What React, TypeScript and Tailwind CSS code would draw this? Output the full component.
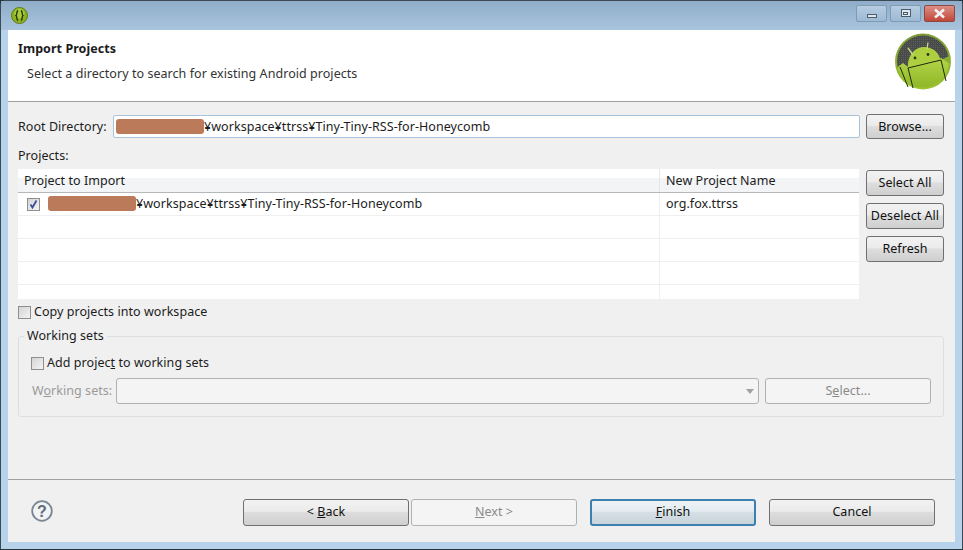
const FONT = "font-['Noto_Sans','Liberation_Sans',sans-serif]"

function Redacted() {
    return <span className="inline-block h-[15px] w-[88px] rounded-[3px] bg-[#bb7b5b] align-[-3px] blur-[0.5px]" />
}

function WinButton({ className = '', focused = false, disabled = false, children }: { className?: string; focused?: boolean; disabled?: boolean; children: React.ReactNode }) {
    let look = 'border-[#707070] bg-[linear-gradient(#f2f2f2_0%,#ebebeb_45%,#dddddd_50%,#cfcfcf_100%)] text-[#111]'
    if (focused) look = 'border-[#3c7fb1] border-2 bg-[linear-gradient(#eef3f6_0%,#e3ebf0_45%,#d5dfe5_50%,#c8d3da_100%)] text-[#111]'
    if (disabled) look = 'border-[#adb2b5] bg-[#f4f4f4] text-[#8a8a8a]'
    return (
        <div className={`flex items-center justify-center rounded-[3px] border ${look} ${className}`}>
            {children}
        </div>
    )
}

function CheckBox({ checked = false }: { checked?: boolean }) {
    return (
        <div className="flex h-[13px] w-[13px] shrink-0 items-center justify-center border border-[#8e8f8f] bg-[linear-gradient(135deg,#d4d4d4,#f4f4f4)]">
            {checked && (
                <svg width="11" height="11" viewBox="0 0 11 11">
                    <path d="M2.5 5.5 L4.5 8.5 L8.5 1.5" fill="none" stroke="#3a4f9c" strokeWidth="1.8" />
                </svg>
            )}
        </div>
    )
}

function TitleIcon() {
    return (
        <svg width="17" height="17" viewBox="0 0 17 17" className="ml-[1px]">
            <circle cx="8.5" cy="8.5" r="8" fill="#8db11f" stroke="#5d7a1a" />
            <circle cx="8.5" cy="6.5" r="5" fill="#a9cc3a" />
            <path d="M7 3.5 C5 4.5 6.5 7.5 5 8.5 C6.5 9.5 5 12.5 7 13.5 M10 3.5 C12 4.5 10.5 7.5 12 8.5 C10.5 9.5 12 12.5 10 13.5" fill="none" stroke="#26350a" strokeWidth="1.4" />
        </svg>
    )
}

function AndroidLogo() {
    return (
        <svg width="56" height="57" viewBox="0 0 56 57">
            <defs>
                <linearGradient id="rim" x1="0" y1="0" x2="0" y2="1">
                    <stop offset="0" stopColor="#7f9c35" />
                    <stop offset="1" stopColor="#9cc52f" />
                </linearGradient>
                <linearGradient id="bot" x1="0" y1="0" x2="0" y2="1">
                    <stop offset="0" stopColor="#b4d44a" />
                    <stop offset="1" stopColor="#8cb524" />
                </linearGradient>
                <pattern id="grille" width="2" height="2" patternUnits="userSpaceOnUse">
                    <rect width="2" height="2" fill="#474a47" />
                    <rect width="1" height="1" fill="#5e615d" />
                </pattern>
                <clipPath id="disc">
                    <circle cx="28" cy="28.5" r="26" />
                </clipPath>
            </defs>
            <circle cx="28" cy="28.5" r="28" fill="url(#rim)" />
            <g clipPath="url(#disc)">
                <path d="M0 34 L0 0 L56 0 L56 22 L46 27 L13 35 Z" fill="url(#grille)" />
                <path d="M0 36 L8 30 L13 34 L46 25 L56 32 L56 57 L0 57 Z" fill="url(#bot)" />
            </g>
            <path d="M13 34.5 C12 24 19 14 29 14 C37 14 44 19 45.5 27.5 Z" fill="#aed040" />
            <path d="M13 15 L18 22 M33 9.5 L32 16" stroke="#c4d98a" strokeWidth="1.3" />
            <circle cx="20" cy="25" r="1.4" fill="#2b3510" />
            <circle cx="33" cy="21.5" r="1.4" fill="#2b3510" />
            <path d="M13 35 L46 27 M13 35 L18 55 M46 27 L51 48 M5 34 L13 54" fill="none" stroke="#1f2a0c" strokeWidth="1" />
        </svg>
    )
}

function HelpIcon() {
    return (
        <svg width="22" height="22" viewBox="0 0 22 22" className="-mt-[2px]">
            <circle cx="11" cy="11" r="9.8" fill="#f1f3f5" stroke="#7a8794" strokeWidth="1.8" />
            <text x="11" y="16.5" textAnchor="middle" fontSize="16" fontWeight="700" fill="#5f6c79" fontFamily="Liberation Sans, sans-serif">?</text>
        </svg>
    )
}

export default function App() {
    return (
        <div className={`h-[550px] w-[963px] overflow-hidden bg-[#26343b] text-[12.5px] leading-[16px] tracking-[0.05px] text-[#1c1c1c] ${FONT}`}>
            <div className="flex h-[549px] flex-col rounded-t-[6px] border-x border-t border-[#3b4a55] bg-[#b7d3ec]">
                <div className="flex h-[29px] shrink-0 items-center justify-between bg-[linear-gradient(#8fadc9,#a9c4dd)] pr-[7px] pl-[9px]">
                    <TitleIcon />
                    <div className="-mt-[5px] flex gap-[3px]">
                        <div className="flex h-[17px] w-[31px] items-end justify-center rounded-[2px] border border-[#7f9ab4] bg-[linear-gradient(#b6cde2,#9db9d3)] pb-[3px]">
                            <div className="h-[4px] w-[10px] border border-[#4c5c6b] bg-[#dfe7ee]" />
                        </div>
                        <div className="flex h-[17px] w-[31px] items-center justify-center rounded-[2px] border border-[#7f9ab4] bg-[linear-gradient(#b6cde2,#9db9d3)]">
                            <div className="flex h-[8px] w-[10px] items-center justify-center border border-[#4c5c6b] bg-[#dfe7ee]">
                                <div className="h-[3px] w-[5px] border border-[#4c5c6b]" />
                            </div>
                        </div>
                        <div className="flex h-[17px] w-[31px] items-center justify-center rounded-[2px] border border-[#8d4a42] bg-[linear-gradient(#dc8f85,#c2463a)]">
                            <svg width="13" height="11" viewBox="0 0 13 11">
                                <path d="M2 1.5 L11 9.5 M11 1.5 L2 9.5" stroke="#f2f2f2" strokeWidth="2.6" />
                            </svg>
                        </div>
                    </div>
                </div>

                <div className="mx-[7px] mb-[7px] flex flex-1 flex-col bg-[#f0f0f0]">
                    <div className="flex h-[72px] shrink-0 justify-between border-b border-[#a0a0a0] bg-white pr-[4px]">
                        <div className="pl-[10px]">
                            <div className="mt-[11px] font-bold">Import Projects</div>
                            <div className="mt-[9px] pl-[9px] text-[#333]">Select a directory to search for existing Android projects</div>
                        </div>
                        <div className="mt-[3px]">
                            <AndroidLogo />
                        </div>
                    </div>

                    <div className="flex-1 px-[10px]">
                        <div className="mt-[12px] flex items-center">
                            <div className="w-[95px]">Root Directory:</div>
                            <div className="flex h-[23px] w-[747px] items-center rounded-[2px] border border-[#a8c4dc] bg-white pl-[2px] whitespace-nowrap">
                                <Redacted />
                                <span>¥workspace¥ttrss¥Tiny-Tiny-RSS-for-Honeycomb</span>
                            </div>
                            <WinButton className="ml-[6px] h-[25px] w-[78px]">Browse...</WinButton>
                        </div>

                        <div className="mt-[9px] h-[16px]">Projects:</div>

                        <div className="mt-[5px] flex">
                            <div className="mr-[1px] h-[130px] w-[841px] bg-white">
                                <div className="flex h-[24px] border-b border-[#b5b8bb] bg-[linear-gradient(#ffffff_40%,#f2f4f6_40%)]">
                                    <div className="w-[642px] border-r border-[#e6e6e6] pt-[4px] pl-[6px]">Project to Import</div>
                                    <div className="pt-[4px] pl-[6px]">New Project Name</div>
                                </div>
                                <div className="flex h-[23px] border-b border-[#efefef]">
                                    <div className="flex w-[642px] items-center border-r border-[#efefef] pl-[9px]">
                                        <CheckBox checked />
                                        <span className="ml-[8px]"><Redacted /></span>
                                        <span>¥workspace¥ttrss¥Tiny-Tiny-RSS-for-Honeycomb</span>
                                    </div>
                                    <div className="flex items-center pl-[6px]">org.fox.ttrss</div>
                                </div>
                                {[0, 1, 2].map(i => (
                                    <div key={i} className="flex h-[23px] border-b border-[#efefef]">
                                        <div className="w-[642px] border-r border-[#efefef]" />
                                    </div>
                                ))}
                                <div className="flex h-[14px]">
                                    <div className="w-[642px] border-r border-[#efefef]" />
                                </div>
                            </div>
                            <div className="ml-[6px] flex flex-col gap-[7px] pt-[1px]">
                                <WinButton className="h-[26px] w-[78px]">Select All</WinButton>
                                <WinButton className="h-[26px] w-[78px]">Deselect All</WinButton>
                                <WinButton className="h-[26px] w-[78px]">Refresh</WinButton>
                            </div>
                        </div>

                        <div className="mt-[5px] flex h-[16px] items-center gap-[3px]">
                            <CheckBox />
                            <span>Copy projects into workspace</span>
                        </div>

                        <div className="relative mt-[16px] h-[81px] w-[926px] rounded-[3px] border border-[#dcdfe2] px-[12px] pt-[18px]">
                            <div className="absolute -top-[9px] left-[5px] bg-[#f0f0f0] px-[3px]">Working sets</div>
                            <div className="flex h-[16px] items-center gap-[3px]">
                                <CheckBox />
                                <span>Add projec<u>t</u> to working sets</span>
                            </div>
                            <div className="mt-[7px] flex items-center">
                                <div className="w-[85px] pl-[1px] text-[#9a9a9a]">W<u>o</u>rking sets:</div>
                                <div className="flex h-[26px] w-[643px] items-center justify-end rounded-[3px] border border-[#adb2b5] bg-[#f4f4f4] pr-[4px]">
                                    <div className="h-0 w-0 border-x-[4px] border-t-[5px] border-x-transparent border-t-[#a0a0a0]" />
                                </div>
                                <WinButton disabled className="ml-[6px] h-[26px] w-[166px]">S<u>e</u>lect...</WinButton>
                            </div>
                        </div>
                    </div>

                    <div className="flex h-[63px] shrink-0 items-center border-t border-[#a0a0a0] pt-[2px] pr-[20px] pl-[23px]">
                        <HelpIcon />
                        <div className="ml-[190px] flex">
                            <WinButton className="h-[27px] w-[166px]">&lt;&nbsp;<u>B</u>ack</WinButton>
                            <WinButton disabled className="ml-[2px] h-[27px] w-[166px]"><u>N</u>ext &gt;</WinButton>
                            <WinButton focused className="ml-[13px] h-[27px] w-[166px]"><u>F</u>inish</WinButton>
                            <WinButton className="ml-[13px] h-[27px] w-[166px]">Cancel</WinButton>
                        </div>
                    </div>
                </div>
            </div>
        </div>
    )
}
